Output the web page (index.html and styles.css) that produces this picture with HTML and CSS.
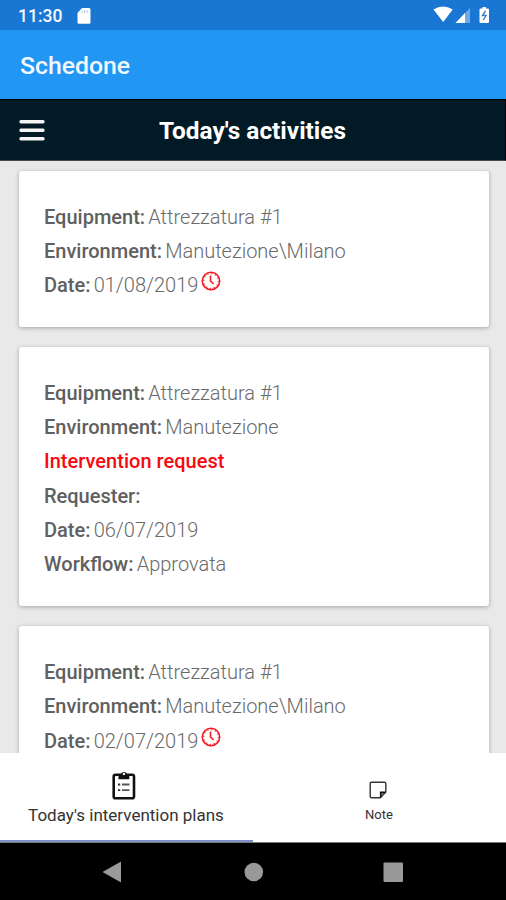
FILE: index.html
```html
<!DOCTYPE html>
<html lang="en">
<head>
<meta charset="utf-8">
<title>Schedone</title>
<link rel="stylesheet" href="styles.css">
</head>
<body>
<div class="screen">
  <div class="status">
    <span class="clock">11:30</span>
    <svg class="sd" width="14" height="16" viewBox="0 0 14 16"><path d="M5 0h7q1.500 0 1.500 1.500v13q0 1.200-1.500 1.200H2q-1.500 0-1.500-1.200V5z" fill="#fff"/><path d="M5 2.500v2.500M7.500 2v3M10 2v3" stroke="#a9cbef" stroke-width="1"/></svg>
    <svg class="indicators" width="58" height="18" viewBox="0 0 58 18"><path d="M.5 3.500Q10 -2.500 19.700 3.500L10.200 16z" fill="#fff"/><path d="M22.500 17L37 2v15z" fill="#71a9e2"/><path d="M22.500 17L32 7v10z" fill="#fff"/><path d="M49.500 1h3.500v1.500h2q1 0 1 1v12.500q0 1-1 1h-7.500q-1 0-1-1V3.500q0-1 1-1h2z" fill="#fff"/><path d="M52.500 5l-3 4.500h3.600l-2.800 4.500" fill="none" stroke="#3f7fc6" stroke-width="1.400"/></svg>
  </div>
  <header class="appbar">Schedone</header>
  <div class="toolbar">
    <svg class="menu" width="26" height="23" viewBox="0 0 26 23"><path d="M2 2.700h22M2 11.300h22M2 19.800h22" stroke="#f5f5f5" stroke-width="3.400" stroke-linecap="round"/></svg>
    <h1>Today's activities</h1>
  </div>
  <main class="list">
    <section class="card">
      <p><b>Equipment:</b><span>Attrezzatura #1</span></p>
      <p><b>Environment:</b><span>Manutezione\Milano</span></p>
      <p><b>Date:</b><span>01/08/2019</span><svg class="late" width="20" height="20" viewBox="0 0 20 20"><circle cx="10" cy="10" r="8.700"/><circle class="ticks" cx="10" cy="10" r="7.500"/><path d="M9.500 4.500V10l3 3"/></svg></p>
    </section>
    <section class="card">
      <p><b>Equipment:</b><span>Attrezzatura #1</span></p>
      <p><b>Environment:</b><span>Manutezione</span></p>
      <p><b class="request">Intervention request</b></p>
      <p><b>Requester:</b></p>
      <p><b>Date:</b><span>06/07/2019</span></p>
      <p><b>Workflow:</b><span>Approvata</span></p>
    </section>
    <section class="card">
      <p><b>Equipment:</b><span>Attrezzatura #1</span></p>
      <p><b>Environment:</b><span>Manutezione\Milano</span></p>
      <p><b>Date:</b><span>02/07/2019</span><svg class="late" width="20" height="20" viewBox="0 0 20 20"><circle cx="10" cy="10" r="8.700"/><circle class="ticks" cx="10" cy="10" r="7.500"/><path d="M9.500 4.500V10l3 3"/></svg></p>
    </section>
  </main>
  <nav class="tabs">
    <div class="tab active">
      <svg width="24" height="30" viewBox="0 0 24 30"><rect x="1.700" y="4.700" width="20.300" height="23.600" rx="1.800" fill="none" stroke="#111" stroke-width="2.600"/><path d="M6.500 4.500h2.200a3.300 3.300 0 0 1 6.400 0h2.200v4.700H6.500z" fill="#111"/><circle cx="11.900" cy="3.900" r="1.200" fill="#fff"/><path d="M6 14.500h2.200M6 20.200h2.200" stroke="#333" stroke-width="1.800"/><path d="M10 14.500h7.500M10 20.200h7.500" stroke="#555" stroke-width="1.800"/></svg>
      <span>Today's intervention plans</span>
    </div>
    <div class="tab note">
      <svg width="18" height="18" viewBox="0 0 18 18"><path d="M2.500 1.200h13q1.300 0 1.300 1.300V11l-5.500 5.700H2.500q-1.300 0-1.300-1.300v-13q0-1.200 1.300-1.200z" fill="none" stroke="#333" stroke-width="1.400"/><path d="M16.500 11.500h-4.700v4.800" fill="none" stroke="#111" stroke-width="1.800"/></svg>
      <span>Note</span>
    </div>
  </nav>
  <div class="navbar">
    <svg width="506" height="58" viewBox="0 0 506 58"><path d="M102.500 29L121 18.500v21z" fill="#999"/><circle cx="253.800" cy="29" r="9.300" fill="#999"/><rect x="383.500" y="19.500" width="19.500" height="19.500" rx="1" fill="#999"/></svg>
  </div>
</div>
</body>
</html>
```
FILE: styles.css
```css
* { box-sizing: border-box; }
body { margin: 0; font-family: Roboto, "Liberation Sans", sans-serif; background: #e9e9e9; }
.screen { width: 506px; height: 900px; display: flex; flex-direction: column; overflow: hidden; }
.status { height: 30px; flex: none; background: #1976d2; display: flex; align-items: center; padding: 1px 14px 0 18px; color: #f4f8fd; }
.clock { font-size: 17.500px; font-weight: 500; line-height: 30px; width: 59px; }
.indicators { margin: 0 1px 1px auto; }
.appbar { height: 69px; flex: none; background: #2196f3; color: #f3f8ff; font-size: 24.800px; font-weight: 500; line-height: 71px; padding-left: 20px; }
.toolbar { height: 62px; flex: none; background: #021a26; border: 1px solid #000; border-left: 0; border-bottom-color: #4b4b4d; display: grid; grid-template-columns: 60px 1fr 60px; align-items: center; }
.menu { margin: 1px 0 0 18.500px; }
.toolbar h1 { margin: 2px 0 0; font-size: 24.400px; font-weight: 700; line-height: 30px; color: #fff; text-align: center; white-space: nowrap; }
.list { height: 592px; flex: none; overflow: hidden; padding: 9.500px 17px 0 19px; display: flex; flex-direction: column; gap: 20px; }
.card { flex: none; background: #fff; border-radius: 3px; padding: 27px 25px; box-shadow: 0 1px 4px rgba(0,0,0,.3); }
.card p { margin: 0; height: 34.200px; line-height: 39px; font-size: 20px; color: #6a6a6a; display: flex; gap: 3.200px; white-space: nowrap; }
.card b { font-weight: 500; color: #606060; }
.card span { font-weight: 300; }
.card .request { color: #f80810; letter-spacing: .02px; }
.late { margin: 5.500px 0 0 -.5px; fill: none; stroke: #f51a22; stroke-width: 1.600; }
.late .ticks { stroke-dasharray: 1 2.930; }
.tabs { height: 90px; flex: none; background: #fff; border-bottom: 1px solid #777; display: grid; grid-template-columns: 1fr 1fr; }
.tab { display: flex; flex-direction: column; align-items: center; color: #333; }
.active { border-bottom: 2px solid #7d90c8; padding-top: 17px; }
.active svg { margin-right: 6px; }
.active span { font-size: 17px; line-height: 30px; margin-right: 1px; }
.note { padding-top: 28px; }
.note svg { margin-right: 4px; }
.note span { font-size: 13px; line-height: 31px; margin-right: 1px; }
.navbar { height: 58px; flex: none; background: #000; }
.navbar svg { display: block; }
```
